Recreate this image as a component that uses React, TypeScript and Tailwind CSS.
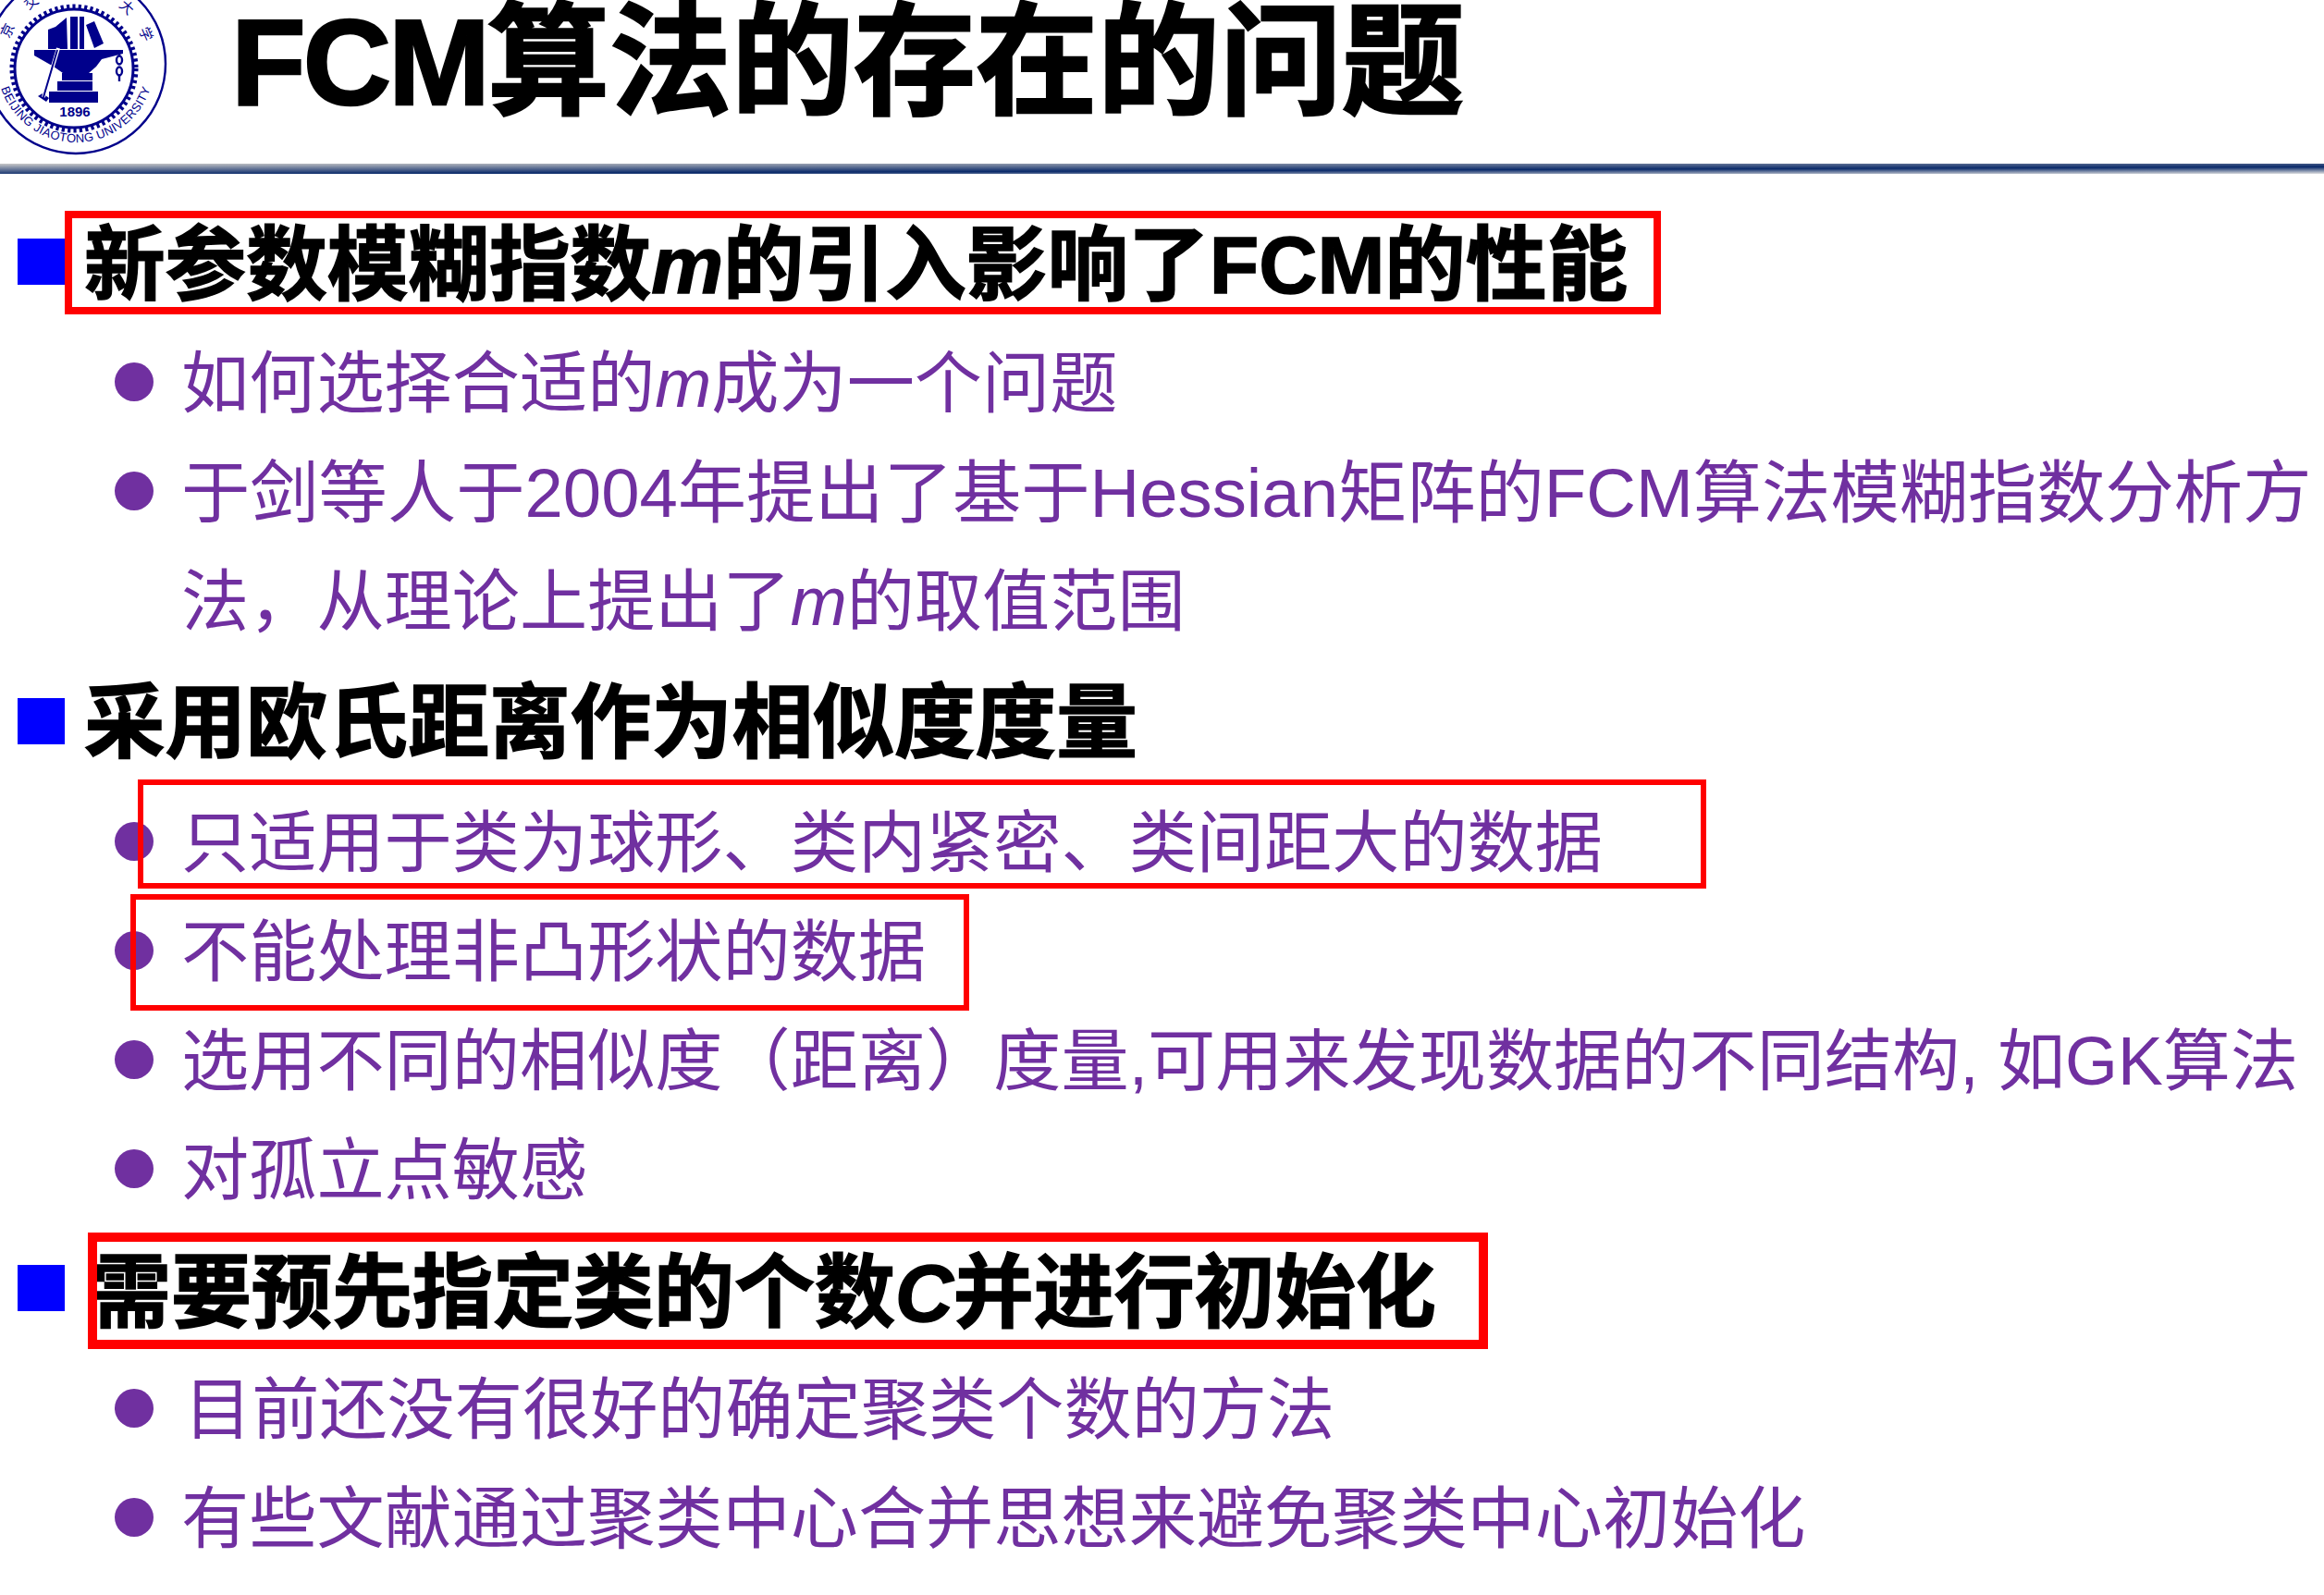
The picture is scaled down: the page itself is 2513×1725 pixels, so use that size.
import React from "react";

const purple = "text-[#7030a0]";

function Logo() {
  const c = "#00008b";
  const glyphs: [string, number][] = [["京", -64], ["交", -36], ["通", -10], ["大", 42], ["学", 67]];
  return (
    <svg width="200" height="176" viewBox="0 0 200 176" className="shrink-0 block">
      <defs>
        <path id="arc" d="M -3 69 A 85 85 0 0 0 167 69" />
      </defs>
      <circle cx="82" cy="69" r="97" fill="none" stroke={c} strokeWidth="2.4" />
      <circle cx="80" cy="74" r="64" fill="none" stroke={c} strokeWidth="3" />
      <circle cx="80" cy="74" r="67" fill="none" stroke={c} strokeWidth="5" strokeDasharray="3.2 3.2" />
      {glyphs.map(([g, a]) => (
        <text key={g} x="0" y="0" fontSize="15" fill={c} textAnchor="middle"
          transform={`translate(82 69) rotate(${a}) translate(0 -77)`}>{g}</text>
      ))}
      <g fill={c}>
        <polygon points="52,32 60,29 72,19 73,53 52,53" />
        <polygon points="76,18 84,18 84,53 76,53" />
        <polygon points="86,18 91,18 91,53 86,53" />
        <polygon points="93,27 102,23 112,47 102,52" />
        <polygon points="37,54 133,54 133,58 110,64 104,72 96,79 68,79 58,72 37,60" />
        <rect x="67" y="79" width="33" height="8" />
        <rect x="62" y="88" width="38" height="10" />
        <rect x="53" y="99" width="53" height="12" />
        <polygon points="41,104 46,101 53,106 50,110" />
      </g>
      <line x1="63" y1="52" x2="47" y2="105" stroke="#ffffff" strokeWidth="4" />
      <line x1="62" y1="54" x2="47" y2="105" stroke={c} strokeWidth="2" />
      <g fill="none" stroke={c} strokeWidth="2.4">
        <line x1="129" y1="55" x2="129" y2="60" />
        <ellipse cx="129" cy="65" rx="3" ry="4.5" />
        <ellipse cx="129" cy="77" rx="3" ry="4.5" />
        <line x1="129" y1="82" x2="129" y2="88" />
      </g>
      <text x="81" y="126" fontSize="15" fontWeight="700" fill={c} textAnchor="middle">1896</text>
      <text fontSize="13" fill={c} letterSpacing="0.4">
        <textPath href="#arc" startOffset="50%" textAnchor="middle">BEIJING JIAOTONG UNIVERSITY</textPath>
      </text>
    </svg>
  );
}

function Head({ children, pl = "pl-[21px]", size = "text-[87.6px]", sq = "mb-[4px]" }: { children: React.ReactNode; pl?: string; size?: string; sq?: string }) {
  return (
    <div className="flex items-center h-[120px] pl-[19px]">
      <div className={`w-[51px] h-[50px] bg-[#0000ff] shrink-0 ${sq}`} />
      <div className={`${pl} ${size} pt-[6px] font-bold text-black whitespace-nowrap leading-none [-webkit-text-stroke:1.5px_black]`}>{children}</div>
    </div>
  );
}

function Item({ children, bullet = true, pl = "pl-[30px]", size = "text-[73.2px]" }: { children: React.ReactNode; bullet?: boolean; pl?: string; size?: string }) {
  return (
    <div className="flex items-center h-[118px] pl-[124px]">
      <div className={`w-[42px] h-[42px] rounded-full shrink-0 ${bullet ? "bg-[#7030a0]" : ""}`} />
      <div className={`${pl} ${size} pt-[6px] ${purple} whitespace-nowrap leading-none`}>{children}</div>
    </div>
  );
}

export default function App() {
  return (
    <div className="relative w-[2513px] h-[1725px] bg-white overflow-hidden font-['Liberation_Sans','Noto_Sans_CJK_SC',sans-serif]">
      <header className="flex items-start h-[177px]">
        <Logo />
        <h1 className="ml-[50px] mt-[-12px] text-[132px] font-bold leading-[160px] whitespace-nowrap text-black [-webkit-text-stroke:2.5px_black]"><span className="tracking-[-3px]">FCM</span>算法的存在的问题</h1>
      </header>
      <div className="h-[11px] bg-[linear-gradient(179.8deg,#c8c8c8_0%,#0a2a6a_62%,#e0e0e0_100%)]" />
      <main className="flex flex-col pt-[37px]">
        <section className="flex flex-col pb-[12px]">
          <Head>新参数模糊指数<i>m</i>的引入影响了FCM的性能</Head>
          <div className="pt-[9px]" />
          <Item>如何选择合适的<i>m</i>成为一个问题</Item>
          <Item size="text-[74.3px]">于剑等人于2004年提出了基于Hessian矩阵的FCM算法模糊指数分析方</Item>
          <Item bullet={false}>法，从理论上提出了<i>m</i>的取值范围</Item>
        </section>
        <section className="flex flex-col pb-[12px]">
          <Head sq="">采用欧氏距离作为相似度度量</Head>
          <div className="pt-[11px]" />
          <Item>只适用于类为球形、类内紧密、类间距大的数据</Item>
          <Item>不能处理非凸形状的数据</Item>
          <Item>选用不同的相似度（距离）度量,可用来发现数据的不同结构, 如GK算法</Item>
          <Item>对孤立点敏感</Item>
        </section>
        <section className="flex flex-col">
          <Head pl="pl-[28px]" size="text-[87px]">需要预先指定类的个数<i>C</i>并进行初始化</Head>
          <div className="pt-[9px]" />
          <Item pl="pl-[33px]">目前还没有很好的确定聚类个数的方法</Item>
          <Item>有些文献通过聚类中心合并思想来避免聚类中心初始化</Item>
        </section>
      </main>
      <div className="absolute left-[70px] top-[228px] w-[1726px] h-[112px] border-[8px] border-[#ff0000]" />
      <div className="absolute left-[149px] top-[843px] w-[1696px] h-[118px] border-[6px] border-[#ff0000]" />
      <div className="absolute left-[141px] top-[967px] w-[907px] h-[126px] border-[6px] border-[#ff0000]" />
      <div className="absolute left-[95px] top-[1333px] w-[1514px] h-[126px] border-[10px] border-[#ff0000]" />
    </div>
  );
}
